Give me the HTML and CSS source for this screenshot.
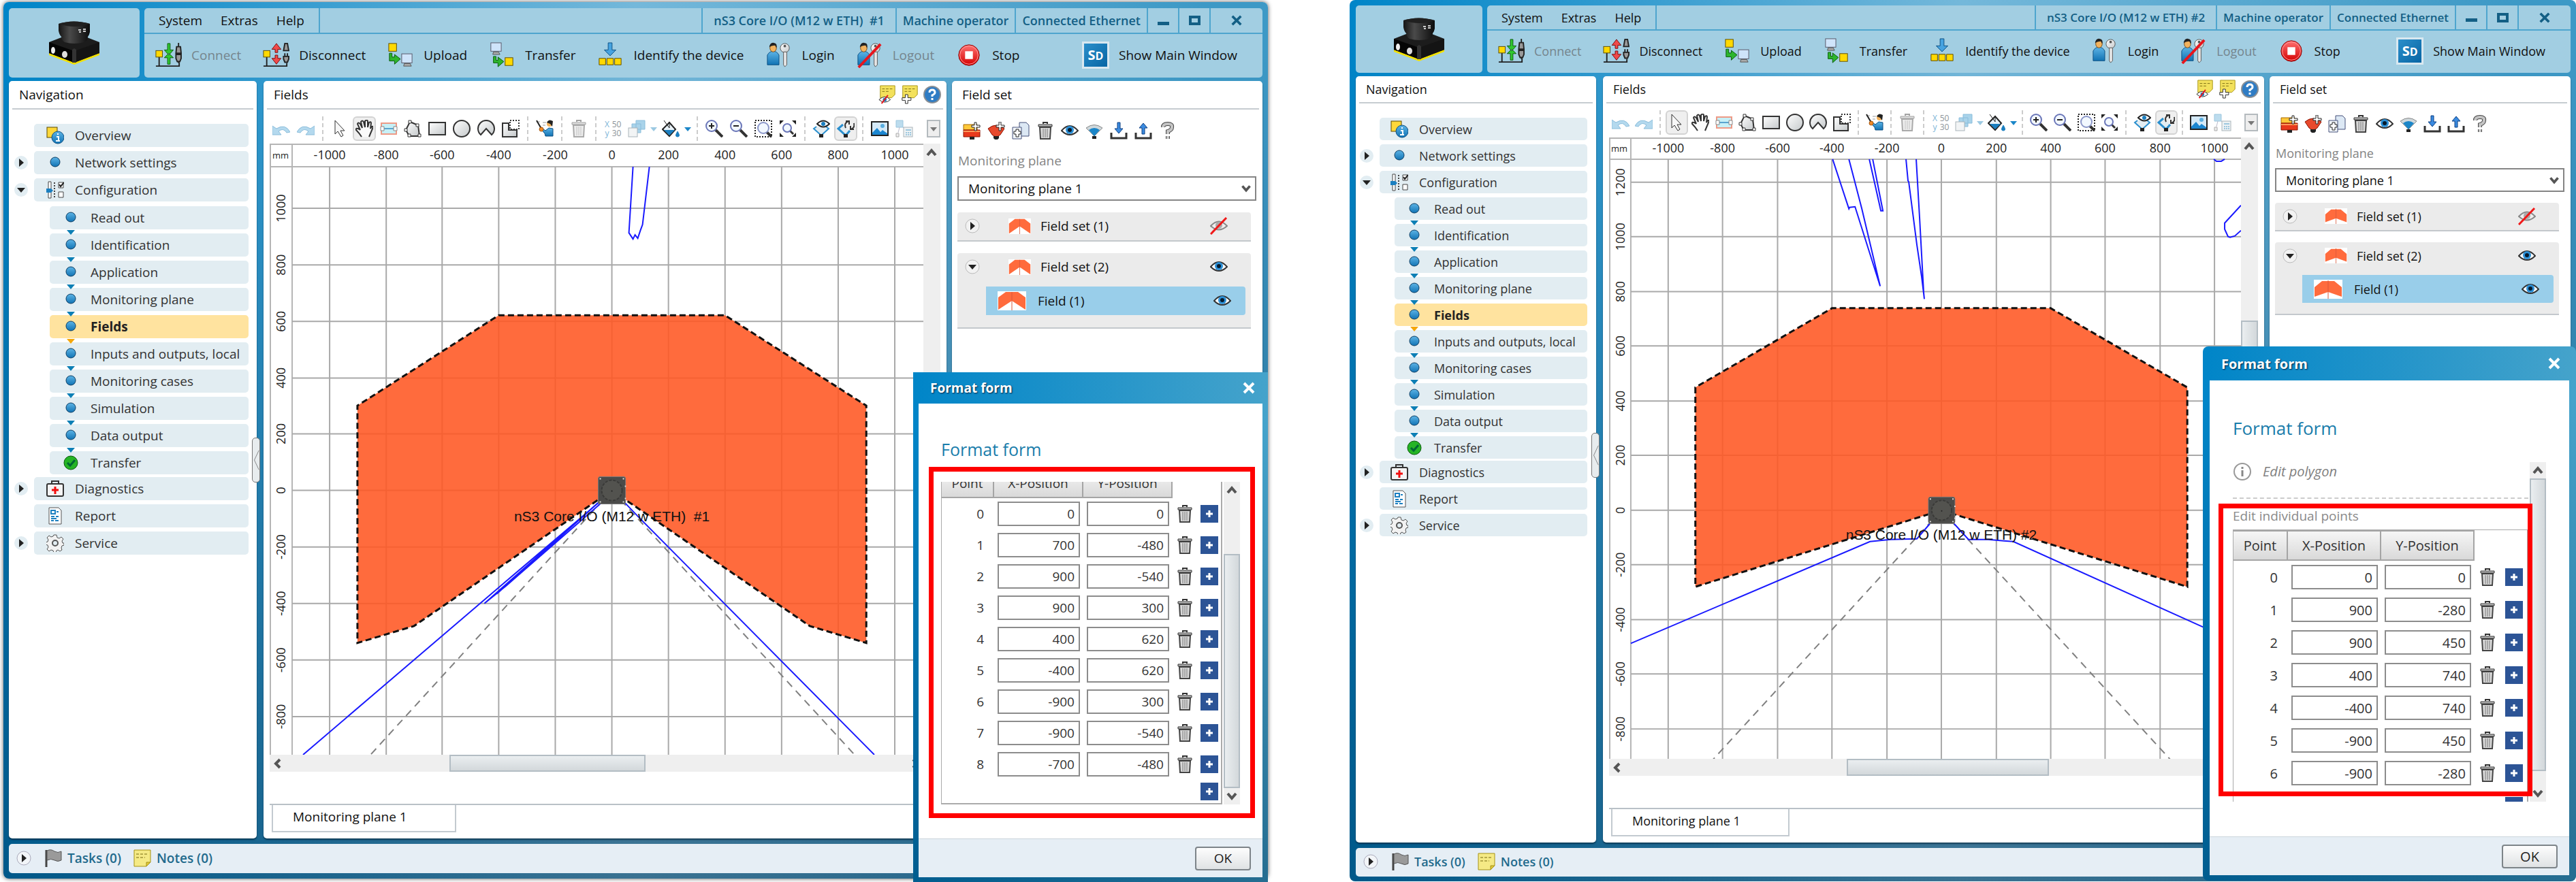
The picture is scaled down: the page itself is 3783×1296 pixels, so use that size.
FILE: index.html
```html
<!DOCTYPE html>
<html lang="en">
<head>
<meta charset="utf-8">
<title>Safety Designer</title>
<link rel="stylesheet" href="styles.css">
</head>
<body>
<svg class="sprite" aria-hidden="true">
  <defs>
    <linearGradient id="gBlue" x1="0" y1="0" x2="0" y2="1"><stop offset="0" stop-color="#5db4e6"/><stop offset="1" stop-color="#1173b4"/></linearGradient>
    <linearGradient id="gGrey" x1="0" y1="0" x2="1" y2="1"><stop offset="0" stop-color="#fff"/><stop offset="1" stop-color="#c4c8ca"/></linearGradient>
    <linearGradient id="gRed" x1="0" y1="0" x2="0" y2="1"><stop offset="0" stop-color="#ff7272"/><stop offset="1" stop-color="#d40000"/></linearGradient>
    <linearGradient id="gBlack" x1="0" y1="0" x2="1" y2="0"><stop offset="0" stop-color="#151515"/><stop offset=".35" stop-color="#4a4a4a"/><stop offset="1" stop-color="#0c0c0c"/></linearGradient>
  </defs>
  <symbol id="device" viewBox="0 0 74 64">
    <path d="M0 45l37 14 37-14v5L37 64 0 50z" fill="#f2e100"/>
    <path d="M0 31l18-7h38l18 7v16L37 61 0 47z" fill="#1c1c1c"/>
    <path d="M0 31l34 12v17L0 47z" fill="#050505"/><path d="M40 43l34-12v16L40 60z" fill="#141414"/><path d="M34 42l3-2 3 2v19h-6z" fill="#333"/>
    <path d="M14 4Q36-3 60 4v12q-1 5-3 7 0 6-5 8-15 4-29 0-4-2-5-8-3-3-4-9z" fill="url(#gBlack)"/>
    <path d="M14 4Q36-3 60 4q-22 8-46 0z" fill="#202020"/>
    <ellipse cx="6" cy="43" rx="3" ry="5" fill="#eee"/><ellipse cx="23" cy="49" rx="4" ry="5" fill="#ddd"/>
    <path d="M43 13h4M50 12h4M44 16h3M50 15h4" stroke="#ccc" stroke-width="2"/>
  </symbol>
  <symbol id="connect" viewBox="0 0 40 40">
    <path d="M6 23v13M1 37h36v-6" fill="none" stroke="#222" stroke-width="2"/>
    <rect x="1" y="13" width="10" height="10" fill="#ffd900" stroke="#5a4a00"/>
    <path d="M19 2v10h-5l7 8 7-8h-5V2zM19 34V24h-5l7-7 7 7h-5v10z" fill="#2fc92f" stroke="#0a5a0a"/>
    <path d="M36 1v6M36 29v3" stroke="#222" stroke-width="2"/>
    <path d="M33 7h6l1 10h-8zM32 19h8v6l-2 5h-4l-2-5z" fill="#999" stroke="#222" stroke-width="2"/>
  </symbol>
  <symbol id="disconnect" viewBox="0 0 40 40">
    <path d="M6 23v13M1 37h36v-5" fill="none" stroke="#222" stroke-width="2"/>
    <rect x="1" y="13" width="10" height="10" fill="#ffd900" stroke="#5a4a00"/>
    <path d="M19 16v-5h-5l7-9 7 9h-5v5zM19 20v5h-5l7 9 7-9h-5v-5z" fill="#f04a4a" stroke="#7a0808"/>
    <path d="M34 2h4l2 11h-8zM32 22h8v4l-2 5h-4l-2-5z" fill="#999" stroke="#222" stroke-width="2"/><path d="M34 17v5M38 17v5" stroke="#222" stroke-width="2"/>
  </symbol>
  <symbol id="upload" viewBox="0 0 40 40">
    <rect x="2" y="2" width="12" height="12" fill="#ffd900" stroke="#5a4a00"/>
    <path d="M3 17v12h8v5l9-8-9-7v4H7v-6z" fill="#2db52d" stroke="#0a5a0a"/>
    <rect x="22" y="18" width="16" height="14" fill="#cfe4fa" stroke="#556"/><path d="M26 33h9l2 4H25z" fill="#aaa" stroke="#555"/>
  </symbol>
  <symbol id="transfer" viewBox="0 0 40 40">
    <rect x="3" y="1" width="16" height="13" fill="#cfe4fa" stroke="#556"/><path d="M7 15h8l2 4H6z" fill="#aaa" stroke="#555"/>
    <path d="M7 22v10h7v6l9-8-9-7v5h-3v-6z" fill="#2db52d" stroke="#0a5a0a"/>
    <rect x="25" y="24" width="12" height="12" fill="#ffd900" stroke="#5a4a00"/>
  </symbol>
  <symbol id="identify" viewBox="0 0 40 40">
    <path d="M17 1v11h-6l9 9 9-9h-6V1z" fill="#46a3e0" stroke="#0c4f82"/>
    <path d="M3 25h10v10H3zM15 25h10v10H15zM27 25h10v10H27z" fill="#ffd900" stroke="#5a4a00"/>
  </symbol>
  <symbol id="login" viewBox="0 0 40 40">
    <path d="M2 35V20q3-6 9-6t9 6v15z" fill="url(#gBlue)" stroke="#0c4f82"/>
    <ellipse cx="11" cy="9" rx="5" ry="6" fill="#f2b25e" stroke="#7a4a10"/><path d="M5 8q1-8 7-7 6 1 4 8l-2-4q-6 0-9 3z" fill="#222"/>
    <circle cx="29" cy="9" r="7" fill="url(#gGrey)" stroke="#555"/><circle cx="29" cy="6" r="2" fill="#555"/>
    <path d="M27 15h5v20l-3 3-2-3z" fill="#e6e6e6" stroke="#555"/>
  </symbol>
  <symbol id="logout" viewBox="0 0 40 40"><use href="#login" width="40" height="40"/><path d="M3 39L37 3" stroke="#e8151c" stroke-width="4"/></symbol>
  <symbol id="stop" viewBox="0 0 40 40"><circle cx="20" cy="20" r="16" fill="url(#gRed)" stroke="#8a0000"/><circle cx="20" cy="20" r="14" fill="none" stroke="#ff9a9a"/><rect x="14" y="14" width="12" height="12" fill="#fff"/></symbol>

  <symbol id="overview" viewBox="0 0 26 26"><rect x="1" y="1" width="15" height="15" fill="#ffd83a" stroke="#5a4a00"/><circle cx="17" cy="16" r="9" fill="url(#gBlue)" stroke="#0c4f82"/><path d="M17 10v2M15 15h3v6M14 21h6" stroke="#fff" stroke-width="2" fill="none"/></symbol>
  <symbol id="dot" viewBox="0 0 26 26"><circle cx="13" cy="12" r="7" fill="url(#gBlue)" stroke="#0b3d63" stroke-width="1"/></symbol>
  <symbol id="done" viewBox="0 0 26 26"><circle cx="13" cy="13" r="10" fill="#25b425" stroke="#0a5a0a"/><path d="M8 13l4 4 7-8" fill="none" stroke="#063" stroke-width="3"/></symbol>
  <symbol id="config" viewBox="0 0 26 26"><path d="M3 1h4v24H3zM18 2h7v8h-7zM18 16h7v8h-7z" fill="#fff" stroke="#444"/><path d="M12 2v23" stroke="#444" stroke-width="2" stroke-dasharray="2 2"/><path d="M0 11h7l3 3-3 3H0z" fill="#1b7fc0"/><path d="M19 5l2 3 5-6" fill="none" stroke="#222" stroke-width="2"/></symbol>
  <symbol id="diag" viewBox="0 0 26 26"><path d="M8 6V2h10v4" fill="none" stroke="#333" stroke-width="2"/><rect x="1" y="6" width="24" height="18" rx="2" fill="#f4f4f4" stroke="#333" stroke-width="2"/><path d="M13 10v11M8 15h10" stroke="#f20d0d" stroke-width="3"/></symbol>
  <symbol id="report" viewBox="0 0 26 26"><path d="M4 1h14l4 4v20H4z" fill="#fff" stroke="#555"/><path d="M7 5h6v5H7zM15 7h3M7 14h5M14 14h4M7 17h8M7 20h4M13 20h5" fill="none" stroke="#1b7fc0" stroke-width="2"/></symbol>
  <symbol id="gear" viewBox="0 0 26 26"><path d="M11 1h4l1 4 3 1 3-2 3 3-2 3 1 3 2 0v3l-3 1-1 3 1 3-3 2-3-2-2 1-1 3h-3l-1-3-3-1-3 2-3-3 2-3-1-3-3-1v-3l3-1 1-3-2-3 3-3 3 2 3-1z" fill="#f2f2f2" stroke="#555"/><circle cx="13" cy="13" r="4" fill="#e2edf2" stroke="#555" stroke-width="2"/></symbol>
  <symbol id="right" viewBox="0 0 22 22"><circle cx="11" cy="11" r="10" class="ring"/><path d="M8 5l7 6-7 6z"/></symbol>
  <symbol id="down" viewBox="0 0 22 22"><circle cx="11" cy="11" r="10" class="ring"/><path d="M5 8h12l-6 7z"/></symbol>

  <symbol id="undo" viewBox="0 0 26 26"><path d="M0 9v13h13l-4-5q7-6 12 2l5-1Q19 5 6 13z" fill="#b4d9ee" stroke="#8abddb" stroke-width="1"/></symbol>
  <symbol id="redo" viewBox="0 0 26 26"><path d="M26 9v13H13l4-5q-7-6-12 2l-5-1Q7 5 20 13z" fill="#b4d9ee" stroke="#8abddb" stroke-width="1"/></symbol>
  <symbol id="pointer" viewBox="0 0 26 26"><path d="M6 1v20l4-4 5 8 3-2-4-7h6z" fill="#f7f7f7" stroke="#333"/></symbol>
  <symbol id="hand" viewBox="0 0 26 26"><path d="M9 25Q6 20 1 15q-1-4 5-1l1 1L3 6q1-3 4 0l3 6L8 3q2-3 4 0l2 8V2q3-3 4 0l0 9 2-7q3-2 3 1l-1 8 2-3q3-1 1 3l-5 12" fill="#fafafa" stroke="#333" stroke-width="2"/></symbol>
  <symbol id="contour" viewBox="0 0 26 26"><rect x="2" y="5" width="22" height="16" fill="#c7f0f7" stroke="#ee9a86" stroke-width="2"/><path d="M3 13h20" stroke="#5ba4cf" stroke-width="2"/><path d="M1 10h5v6H1zM20 10h5v6h-5z" fill="#fff" stroke="#888"/></symbol>
  <symbol id="polygon" viewBox="0 0 26 26"><path d="M9 3l12 5 2 16H8L3 15z" fill="url(#gGrey)" stroke="#333" stroke-width="2"/><path d="M7 1h4v4H7zM18 6h4v4h-4zM21 21h4v4h-4zM6 21h4v4H6zM1 13h4v4H1z" fill="#fff" stroke="#333"/></symbol>
  <symbol id="rect" viewBox="0 0 26 26"><rect x="1" y="4" width="24" height="18" fill="url(#gGrey)" stroke="#333" stroke-width="2"/></symbol>
  <symbol id="circle" viewBox="0 0 26 26"><circle cx="13" cy="13" r="12" fill="url(#gGrey)" stroke="#333" stroke-width="2"/></symbol>
  <symbol id="arc" viewBox="0 0 26 26"><path d="M5 22a12 12 0 1 1 16 0l-8-9z" fill="url(#gGrey)" stroke="#333" stroke-width="2"/></symbol>
  <symbol id="cut" viewBox="0 0 26 26"><path d="M1 5h9v10h12v10H1z" fill="url(#gGrey)" stroke="#333" stroke-width="2"/><path d="M12 1h13v13H12z" fill="none" stroke="#333" stroke-width="2" stroke-dasharray="2 2"/></symbol>
  <symbol id="wizard" viewBox="0 0 26 26"><path d="M1 3h5M10 4h5M10 8h4" stroke="#999" stroke-width="1"/><path d="M1 1l7 12" stroke="#222" stroke-width="2"/><path d="M10 13l4 3 5-4 6 1v11H14l-1-4-4-4z" fill="url(#gBlue)" stroke="#0c4f82"/><circle cx="20" cy="6" r="4" fill="#f2b25e"/><path d="M16 4q3-6 9-2l-1 8-3-4z" fill="#222"/><circle cx="8" cy="14" r="3" fill="#f08a2a" stroke="#a4540a"/></symbol>
  <symbol id="trash" viewBox="0 0 26 26"><path d="M10 3V1h6v2" fill="none" stroke="#333" stroke-width="2"/><path d="M5 8h16l-1 17H6z" fill="#d9d9d9" stroke="#444" stroke-width="2"/><path d="M3 4h20v3H3z" fill="#bbb" stroke="#333"/><path d="M10 10v13M13 10v13M16 10v13" stroke="#777" stroke-width="1"/></symbol>
  <symbol id="layers" viewBox="0 0 26 26"><path d="M12 1h13v13H12zM6 6h13v13H6z" fill="#a9d3ea" stroke="#8abddb"/><rect x="1" y="12" width="13" height="13" fill="#f2f4f5" stroke="#a9b4ba"/></symbol>
  <symbol id="bucket" viewBox="0 0 26 26"><path d="M1 14L11 4l9 10-9 10z" fill="#e8f2f8" stroke="#222" stroke-width="2"/><path d="M3 15h16l-8 8z" fill="#1b7fc0"/><path d="M3 1l8 11V3" fill="none" stroke="#222" stroke-width="1"/><path d="M23 17q5 8 0 8t0-8z" fill="#1b7fc0" stroke="#1b7fc0"/></symbol>
  <symbol id="caret" viewBox="0 0 12 26"><path d="M1 11h10l-5 6z"/></symbol>
  <symbol id="zoomin" viewBox="0 0 26 26"><path d="M15 15l10 10" stroke="#333" stroke-width="4"/><circle cx="9" cy="9" r="8" fill="#f2f8ff" stroke="#6a76b8" stroke-width="2"/><path d="M5 9h8M9 5v8" stroke="#222" stroke-width="2"/></symbol>
  <symbol id="zoomout" viewBox="0 0 26 26"><path d="M15 15l10 10" stroke="#333" stroke-width="4"/><circle cx="9" cy="9" r="8" fill="#f2f8ff" stroke="#6a76b8" stroke-width="2"/><path d="M5 9h8" stroke="#222" stroke-width="2"/></symbol>
  <symbol id="zoomsel" viewBox="0 0 26 26"><rect x="1" y="1" width="24" height="24" fill="none" stroke="#222" stroke-width="2" stroke-dasharray="2 2"/><path d="M18 18l7 7" stroke="#333" stroke-width="4"/><circle cx="13" cy="12" r="8" fill="#f2f8ff" stroke="#8a96c8" stroke-width="2"/></symbol>
  <symbol id="zoomfit" viewBox="0 0 26 26"><path d="M1 7V1h6zM19 1h6v6zM25 19v6h-6zM7 25H1v-6z" fill="#222"/><path d="M15 15l6 6" stroke="#333" stroke-width="3"/><circle cx="12" cy="12" r="6" fill="#f2f8ff" stroke="#6a76b8" stroke-width="2"/></symbol>
  <symbol id="scanview" viewBox="0 0 26 26"><path d="M6 10L2 13l11 10 11-10-4-3" fill="#e4edf2" stroke="#2a8fce" stroke-width="2"/><path d="M7 6q9-9 18 0-9 9-18 0z" fill="#fff" stroke="#222" stroke-width="2"/><circle cx="16" cy="6" r="3" fill="#1b7fc0"/><path d="M10 21h6v5h-6z" fill="#222"/></symbol>
  <symbol id="scanlive" viewBox="0 0 26 26"><path d="M9 7L2 13l11 10 6-7" fill="#e4edf2" stroke="#2a8fce" stroke-width="3"/><path d="M13 12q-3-7 4-10M25 5q2 7-5 9M13 2h5v5M25 14h-5V9" fill="none" stroke="#333" stroke-width="2"/><path d="M10 21h6v5h-6z" fill="#222"/></symbol>
  <symbol id="picture" viewBox="0 0 26 26"><rect x="1" y="3" width="24" height="20" fill="#d4e9f7" stroke="#222" stroke-width="2"/><path d="M2 22v-3l7-7 5 6 3-3 7 5v2z" fill="#1b86d0"/><circle cx="17" cy="9" r="3" fill="#5aaee0"/></symbol>
  <symbol id="calc" viewBox="0 0 26 26"><path d="M1 1h10v10H1z" fill="#bcdcee" stroke="#9bc6de"/><path d="M11 11l3 3M6 11l-2 8" stroke="#bbc" stroke-width="1"/><rect x="12" y="11" width="13" height="14" fill="#eef2f4" stroke="#a9b4ba"/><path d="M15 14h8v2h-8z" fill="#9bc6de"/><path d="M15 19h8M15 22h8" stroke="#9bc6de" stroke-width="2" stroke-dasharray="2 1"/><path d="M1 20h4v5H1z" fill="#eee" stroke="#aaa"/></symbol>
  <symbol id="notehide" viewBox="0 0 26 30"><path d="M2 1h23v14l-5 5H2z" fill="#f3e15c" stroke="#a59214"/><path d="M5 6h17M5 10h12" stroke="#776a10" stroke-width="1" stroke-dasharray="4 2"/><path d="M0 23q9-9 18 0-9 8-18 0z" fill="#fff" stroke="#222"/><circle cx="9" cy="23" r="3" fill="#1b7fc0"/><path d="M4 29L14 16" stroke="#e8151c" stroke-width="2"/></symbol>
  <symbol id="noteadd" viewBox="0 0 26 30"><path d="M2 1h23v14l-5 5H2z" fill="#f3e15c" stroke="#a59214"/><path d="M5 6h17M5 10h12" stroke="#776a10" stroke-width="1" stroke-dasharray="4 2"/><path d="M6 15h4v5h5v4h-5v5H6v-5H1v-4h5z" fill="#fff" stroke="#222"/></symbol>
  <symbol id="help" viewBox="0 0 26 26"><circle cx="13" cy="13" r="12" fill="#2f7cc4" stroke="#8a8f94" stroke-width="2"/><path d="M9 10q0-4 4-4t4 4q0 2-4 4v2M13 18v3" fill="none" stroke="#fff" stroke-width="3"/></symbol>

  <symbol id="setadd" viewBox="0 0 26 26"><path d="M1 4h20v8H1z" fill="#ffc93a" stroke="#a66a00"/><path d="M1 12h24v10H1z" fill="#e8391c" stroke="#8a1200"/><path d="M1 14h24" stroke="#ff9a5a" stroke-width="2"/><path d="M10 22h7v4h-7z" fill="#222"/><path d="M17 1h3v4h5v3h-5v5h-3V8h-4V5h4z" fill="#fff" stroke="#222"/></symbol>
  <symbol id="fieldadd" viewBox="0 0 26 26"><path d="M1 10q12-10 24 0l-6 9-6 4-6-4z" fill="#e8492c" stroke="#8a1200"/><path d="M9 21h8v3l-2 2h-4l-2-2z" fill="#222"/><path d="M17 0h3v5h5v3h-5v5h-3V8h-4V5h4z" fill="#fff" stroke="#222"/></symbol>
  <symbol id="copy" viewBox="0 0 26 26"><path d="M11 1h10l4 4v16H11z" fill="#dce8f4" stroke="#44507a"/><path d="M1 8h13v17H1z" fill="#f0f4f8" stroke="#44507a"/><path d="M6 11h4v3h3v4h-3v4H6v-4H3v-4h3z" fill="#fff" stroke="#222"/></symbol>
  <symbol id="eye" viewBox="0 0 26 26"><path d="M1 13q12-14 24 0-12 12-24 0z" fill="#fff" stroke="#333" stroke-width="2"/><circle cx="13" cy="12" r="6" fill="#2b8fd6"/><circle cx="13" cy="12" r="3" fill="#061a2c"/></symbol>
  <symbol id="eyeoff" viewBox="0 0 26 26"><path d="M1 13q12-13 24 0-12 11-24 0z" fill="#eee" stroke="#888" stroke-width="2"/><circle cx="13" cy="12" r="5" fill="#aaa"/><path d="M1 25L24 1" stroke="#f01818" stroke-width="3"/></symbol>
  <symbol id="scan" viewBox="0 0 26 26"><path d="M1 9q12-9 24 0L13 21z" fill="#cfd8dc" stroke="#888"/><path d="M5 12q8-6 16 0l-8 9z" fill="#1b86c8"/><path d="M10 21h6v4h-6z" fill="#222"/></symbol>
  <symbol id="import" viewBox="0 0 26 26"><path d="M2 16v8h22v-8" fill="none" stroke="#333" stroke-width="3"/><path d="M11 1h4v9h4l-6 7-6-7h4z" fill="#3b8be0" stroke="#0c3f82"/></symbol>
  <symbol id="export" viewBox="0 0 26 26"><path d="M2 16v8h22v-8" fill="none" stroke="#333" stroke-width="3"/><path d="M11 18h4V9h4l-6-7-6 7h4z" fill="#3b8be0" stroke="#0c3f82"/></symbol>
  <symbol id="ask" viewBox="0 0 26 26"><path d="M6 8q0-5 7-5t6 5q0 4-6 6v4M13 21v4" fill="none" stroke="#444" stroke-width="6"/><path d="M6 8q0-5 7-5t6 5q0 4-6 6v4M13 21v4" fill="none" stroke="#c4c4c4" stroke-width="4"/></symbol>
  <symbol id="shapeA" viewBox="0 0 42 28" preserveAspectRatio="none"><path d="M0 0h42v28H0z" fill="#fff"/><path d="M1 9L12 1h18l11 8v18L21 14 1 27z" fill="#ff6b3d"/><path d="M21 1v27" stroke="#d9583a" stroke-width="1"/></symbol>
  <symbol id="shapeB" viewBox="0 0 42 28" preserveAspectRatio="none"><path d="M0 0h42v28H0z" fill="#fff"/><path d="M1 11L12 2h18l11 9v14L21 18 1 25z" fill="#ff6b3d"/><path d="M21 1v27" stroke="#d9583a" stroke-width="1"/></symbol>
  <symbol id="flag" viewBox="0 0 26 26"><path d="M3 1v25" stroke="#444" stroke-width="3"/><path d="M4 2q6-3 11 1 5 3 10 0v13q-5 3-10 0-5-3-11 0z" fill="#9a9a9a" stroke="#555"/></symbol>
  <symbol id="note" viewBox="0 0 26 26"><path d="M1 1h24v18l-6 6H1z" fill="#f5ea85" stroke="#a59214"/><path d="M25 19h-6v6z" fill="#e0c93a" stroke="#a59214"/><path d="M4 7h18M4 12h13" stroke="#776a10" stroke-width="1" stroke-dasharray="4 2"/></symbol>
  <symbol id="chevup" viewBox="0 0 24 24"><path d="M6 16l6-7 6 7" fill="none" stroke="#555" stroke-width="4"/></symbol>
  <symbol id="chevdown" viewBox="0 0 24 24"><path d="M6 8l6 7 6-7" fill="none" stroke="#555" stroke-width="4"/></symbol>
  <symbol id="chevleft" viewBox="0 0 24 24"><path d="M15 6l-6 6 6 6" fill="none" stroke="#555" stroke-width="4"/></symbol>
  <symbol id="chevright" viewBox="0 0 24 24"><path d="M9 6l6 6-6 6" fill="none" stroke="#555" stroke-width="4"/></symbol>
  <symbol id="plus" viewBox="0 0 26 26"><path d="M0 0h26v26H0z" fill="#2c5496"/><path d="M13 8v10M8 13h10" stroke="#fff" stroke-width="3"/></symbol>
  <symbol id="cross" viewBox="0 0 20 20"><path d="M3 3l14 14M17 3L3 17" stroke="currentColor" stroke-width="4"/></symbol>
  <symbol id="info" viewBox="0 0 28 28"><circle cx="14" cy="14" r="12" fill="#fff" stroke="#999" stroke-width="2"/><path d="M14 7v3M14 12v9" stroke="#888" stroke-width="3"/></symbol>
  <symbol id="topview" viewBox="0 0 42 42"><rect x="1" y="1" width="40" height="40" rx="3" fill="#4b4b49" stroke="#777"/><circle cx="21" cy="21" r="15" fill="#53534f" stroke="#3a3a38" stroke-width="2" stroke-dasharray="4 2"/><path d="M3 4h2M37 4h2M3 38h2M37 38h2M41 14v2M41 32v2" stroke="#ddd" stroke-width="2"/><circle cx="21" cy="22" r="1" fill="#222"/></symbol>
</svg>

<main class="desktop">

<section class="app app-a" aria-label="nS3 Core I/O #1">
  <header class="top">
    <div class="logo"><svg><use href="#device"/></svg></div>
    <div class="bars">
      <div class="titlebar">
        <nav class="menu"><a href="#">System</a><a href="#">Extras</a><a href="#">Help</a></nav>
        <span class="cell name">nS3 Core I/O (M12 w ETH)&nbsp; #1</span><span class="cell">Machine operator</span><span class="cell">Connected Ethernet</span>
        <button class="win" aria-label="Minimize"><i class="min"></i></button><button class="win" aria-label="Maximize"><i class="max"></i></button><button class="win close" aria-label="Close"><svg><use href="#cross"/></svg></button>
      </div>
      <div class="actions">
        <button disabled><svg><use href="#connect"/></svg>Connect</button>
        <button><svg><use href="#disconnect"/></svg>Disconnect</button>
        <button><svg><use href="#upload"/></svg>Upload</button>
        <button><svg><use href="#transfer"/></svg>Transfer</button>
        <button><svg><use href="#identify"/></svg>Identify the device</button>
        <button><svg><use href="#login"/></svg>Login</button>
        <button disabled><svg><use href="#logout"/></svg>Logout</button>
        <button><svg><use href="#stop"/></svg>Stop</button>
        <button class="last"><span class="sd"><b>S<small>D</small></b></span>Show Main Window</button>
      </div>
    </div>
  </header>

  <div class="work">
    <aside class="panel side">
      <h2>Navigation</h2>
      <ul class="tree">
        <li><a href="#"><svg><use href="#overview"/></svg>Overview</a></li>
        <li><button class="exp" aria-label="Expand"><svg><use href="#right"/></svg></button><a href="#"><svg><use href="#dot"/></svg>Network settings</a></li>
        <li><button class="exp" aria-label="Collapse"><svg><use href="#down"/></svg></button><a href="#"><svg><use href="#config"/></svg>Configuration</a></li>
      </ul>
      <ul class="tree sub">
        <li><a href="#"><svg><use href="#dot"/></svg>Read out</a></li>
        <li><a href="#"><svg><use href="#dot"/></svg>Identification</a></li>
        <li><a href="#"><svg><use href="#dot"/></svg>Application</a></li>
        <li><a href="#"><svg><use href="#dot"/></svg>Monitoring plane</a></li>
        <li class="current"><a href="#" aria-current="page"><svg><use href="#dot"/></svg>Fields</a></li>
        <li><a href="#"><svg><use href="#dot"/></svg>Inputs and outputs, local</a></li>
        <li><a href="#"><svg><use href="#dot"/></svg>Monitoring cases</a></li>
        <li><a href="#"><svg><use href="#dot"/></svg>Simulation</a></li>
        <li><a href="#"><svg><use href="#dot"/></svg>Data output</a></li>
        <li><a href="#"><svg><use href="#done"/></svg>Transfer</a></li>
      </ul>
      <ul class="tree">
        <li><button class="exp" aria-label="Expand"><svg><use href="#right"/></svg></button><a href="#"><svg><use href="#diag"/></svg>Diagnostics</a></li>
        <li><a href="#"><svg><use href="#report"/></svg>Report</a></li>
        <li><button class="exp" aria-label="Expand"><svg><use href="#right"/></svg></button><a href="#"><svg><use href="#gear"/></svg>Service</a></li>
      </ul>
      <button class="handle" aria-label="Collapse navigation"><svg viewBox="0 0 12 66"><path d="M11 16L3 33l8 17" fill="none" stroke="#777" stroke-width="1"/></svg></button>
    </aside>

    <section class="panel center">
      <h2>Fields<span class="tips"><button aria-label="Hide notes"><svg><use href="#notehide"/></svg></button><button aria-label="Add note"><svg><use href="#noteadd"/></svg></button><button aria-label="Help"><svg><use href="#help"/></svg></button></span></h2>
      <div class="tools">
        <button aria-label="Undo"><svg><use href="#undo"/></svg></button><button aria-label="Redo"><svg><use href="#redo"/></svg></button><hr>
        <button aria-label="Select"><svg><use href="#pointer"/></svg></button><button class="on" aria-label="Pan"><svg><use href="#hand"/></svg></button><button aria-label="Contour"><svg><use href="#contour"/></svg></button><button aria-label="Polygon"><svg><use href="#polygon"/></svg></button><button aria-label="Rectangle"><svg><use href="#rect"/></svg></button><button aria-label="Circle"><svg><use href="#circle"/></svg></button><button aria-label="Arc"><svg><use href="#arc"/></svg></button><button aria-label="Cut out"><svg><use href="#cut"/></svg></button><hr>
        <button aria-label="Assistant"><svg><use href="#wizard"/></svg></button><hr>
        <button aria-label="Delete" class="dim"><svg><use href="#trash"/></svg></button><hr>
        <button aria-label="Coordinates" class="xy"><b>X</b><i>50</i><b>y</b><i>30</i></button><button aria-label="Order"><svg><use href="#layers"/></svg></button><svg class="caret pale"><use href="#caret"/></svg><button aria-label="Fill"><svg><use href="#bucket"/></svg></button><svg class="caret"><use href="#caret"/></svg><hr>
        <button aria-label="Zoom in"><svg><use href="#zoomin"/></svg></button><button aria-label="Zoom out"><svg><use href="#zoomout"/></svg></button><button aria-label="Zoom selection"><svg><use href="#zoomsel"/></svg></button><button aria-label="Zoom to fit"><svg><use href="#zoomfit"/></svg></button><hr>
        <button aria-label="Show contour"><svg><use href="#scanview"/></svg></button><button class="on" aria-label="Live contour"><svg><use href="#scanlive"/></svg></button><hr>
        <button aria-label="Background image"><svg><use href="#picture"/></svg></button><button aria-label="Calculate"><svg><use href="#calc"/></svg></button>
        <button class="more" aria-label="More tools"><svg><use href="#caret"/></svg></button>
      </div>
      <div class="canvas">
        <svg class="plot" viewBox="397 211 959 897" preserveAspectRatio="xMinYMin slice" role="img" aria-label="Field editor">
          <path class="frame" d="M398 1108V212h958M398 245h958M430 212v896"/>
          <path class="grid" d="M485 245v863M568 245v863M650 245v863M733 245v863M816 245v863M899 245v863M982 245v863M1065 245v863M1148 245v863M1231 245v863M1314 245v863M430 306h926M430 389h926M430 472h926M430 555h926M430 637h926M430 720h926M430 803h926M430 886h926M430 969h926M430 1052h926"/>
          <g class="ticks">
            <text class="unit" x="413" y="233">mm</text>
            <text x="485" y="234">-1000</text><text x="568" y="234">-800</text><text x="650" y="234">-600</text><text x="733" y="234">-400</text><text x="816" y="234">-200</text><text x="899" y="234">0</text><text x="982" y="234">200</text><text x="1065" y="234">400</text><text x="1148" y="234">600</text><text x="1231" y="234">800</text><text x="1314" y="234">1000</text>
            <g transform="rotate(-90)"><text x="-306" y="420">1000</text><text x="-389" y="420">800</text><text x="-472" y="420">600</text><text x="-555" y="420">400</text><text x="-637" y="420">200</text><text x="-720" y="420">0</text><text x="-803" y="420">-200</text><text x="-886" y="420">-400</text><text x="-969" y="420">-600</text><text x="-1052" y="420">-800</text></g>
          </g>
          <path class="field" transform="translate(899 720) scale(.4147 -.4147)" d="M0 0L700-480 900-540V300L400 620H-400L-900 300V-540L-700-480z"/>
          <path class="sector" d="M899 720L545 1108M899 720L1255 1108"/>
          <path class="beam" d="M930 245L924 342 930 351 933 345 937 350 941 338 944 330 954 245M882 736L736 860 446 1108M879 738L712 886 744 860 884 738M876 741L730 872M916 736L940 761 1284 1108"/>
          <use href="#topview" x="878" y="699" width="42" height="42"/>
          <text class="tag" x="899" y="765">nS3 Core I/O (M12 w ETH)&#160; #1</text>
        </svg>
        <div class="vscroll"><svg><use href="#chevup"/></svg></div>
        <div class="hscroll"><svg><use href="#chevleft"/></svg><i class="thumb"></i><svg class="far"><use href="#chevright"/></svg></div>
      </div>
      <div class="tabs"><button>Monitoring plane 1</button></div>
    </section>

    <aside class="panel sets">
      <h2>Field set</h2>
      <div class="settools"><button aria-label="Add field set"><svg><use href="#setadd"/></svg></button><button aria-label="Add field"><svg><use href="#fieldadd"/></svg></button><button aria-label="Duplicate"><svg><use href="#copy"/></svg></button><button aria-label="Delete"><svg><use href="#trash"/></svg></button><button aria-label="Show"><svg><use href="#eye"/></svg></button><button aria-label="Scan"><svg><use href="#scan"/></svg></button><button aria-label="Import"><svg><use href="#import"/></svg></button><button aria-label="Export"><svg><use href="#export"/></svg></button><button aria-label="Help"><svg><use href="#ask"/></svg></button></div>
      <label for="plane-a">Monitoring plane</label>
      <div class="pick"><select id="plane-a"><option>Monitoring plane 1</option></select><svg><use href="#chevdown"/></svg></div>
      <div class="set"><div class="line"><button class="exp" aria-label="Expand"><svg><use href="#right"/></svg></button><svg class="thumbnail"><use href="#shapeA"/></svg><span>Field set (1)</span><button class="see" aria-label="Show"><svg><use href="#eyeoff"/></svg></button></div></div>
      <div class="set"><div class="line"><button class="exp" aria-label="Collapse"><svg><use href="#down"/></svg></button><svg class="thumbnail"><use href="#shapeA"/></svg><span>Field set (2)</span><button class="see" aria-label="Hide"><svg><use href="#eye"/></svg></button></div>
        <div class="child"><svg class="thumbnail"><use href="#shapeA"/></svg><span>Field (1)</span><button class="see" aria-label="Hide"><svg><use href="#eye"/></svg></button></div></div>
    </aside>
  </div>

  <footer class="status"><button class="exp" aria-label="Expand"><svg><use href="#right"/></svg></button><a href="#"><svg><use href="#flag"/></svg>Tasks (0)</a><a href="#"><svg><use href="#note"/></svg>Notes (0)</a></footer>

  <section class="dialog" role="dialog" aria-label="Format form">
    <header><b>Format form</b><button aria-label="Close"><svg><use href="#cross"/></svg></button></header>
    <div class="content">
      <h3>Format form</h3>
      <div class="scroller">
        <div class="view end">
          <table>
            <colgroup><col class="c-point"><col class="c-pos"><col class="c-pos"><col class="c-icon"><col></colgroup>
            <thead><tr><th scope="col">Point</th><th scope="col">X-Position</th><th scope="col">Y-Position</th><td></td><td></td></tr></thead>
            <tbody>
              <tr><td>0</td><td><input aria-label="X 0" value="0"></td><td><input aria-label="Y 0" value="0"></td><td><button aria-label="Delete point"><svg><use href="#trash"/></svg></button></td><td><button aria-label="Insert point"><svg><use href="#plus"/></svg></button></td></tr>
              <tr><td>1</td><td><input aria-label="X 1" value="700"></td><td><input aria-label="Y 1" value="-480"></td><td><button aria-label="Delete point"><svg><use href="#trash"/></svg></button></td><td><button aria-label="Insert point"><svg><use href="#plus"/></svg></button></td></tr>
              <tr><td>2</td><td><input aria-label="X 2" value="900"></td><td><input aria-label="Y 2" value="-540"></td><td><button aria-label="Delete point"><svg><use href="#trash"/></svg></button></td><td><button aria-label="Insert point"><svg><use href="#plus"/></svg></button></td></tr>
              <tr><td>3</td><td><input aria-label="X 3" value="900"></td><td><input aria-label="Y 3" value="300"></td><td><button aria-label="Delete point"><svg><use href="#trash"/></svg></button></td><td><button aria-label="Insert point"><svg><use href="#plus"/></svg></button></td></tr>
              <tr><td>4</td><td><input aria-label="X 4" value="400"></td><td><input aria-label="Y 4" value="620"></td><td><button aria-label="Delete point"><svg><use href="#trash"/></svg></button></td><td><button aria-label="Insert point"><svg><use href="#plus"/></svg></button></td></tr>
              <tr><td>5</td><td><input aria-label="X 5" value="-400"></td><td><input aria-label="Y 5" value="620"></td><td><button aria-label="Delete point"><svg><use href="#trash"/></svg></button></td><td><button aria-label="Insert point"><svg><use href="#plus"/></svg></button></td></tr>
              <tr><td>6</td><td><input aria-label="X 6" value="-900"></td><td><input aria-label="Y 6" value="300"></td><td><button aria-label="Delete point"><svg><use href="#trash"/></svg></button></td><td><button aria-label="Insert point"><svg><use href="#plus"/></svg></button></td></tr>
              <tr><td>7</td><td><input aria-label="X 7" value="-900"></td><td><input aria-label="Y 7" value="-540"></td><td><button aria-label="Delete point"><svg><use href="#trash"/></svg></button></td><td><button aria-label="Insert point"><svg><use href="#plus"/></svg></button></td></tr>
              <tr><td>8</td><td><input aria-label="X 8" value="-700"></td><td><input aria-label="Y 8" value="-480"></td><td><button aria-label="Delete point"><svg><use href="#trash"/></svg></button></td><td><button aria-label="Insert point"><svg><use href="#plus"/></svg></button></td></tr>
              <tr class="append"><td></td><td></td><td></td><td></td><td><button aria-label="Append point"><svg><use href="#plus"/></svg></button></td></tr>
            </tbody>
          </table>
        </div>
        <div class="bar"><svg><use href="#chevup"/></svg><i class="thumb"></i><svg><use href="#chevdown"/></svg></div>
      </div>
    </div>
    <footer><button>OK</button></footer>
    <div class="marker"></div>
  </section>
</section>

<section class="app app-b" aria-label="nS3 Core I/O #2">
  <header class="top">
    <div class="logo"><svg><use href="#device"/></svg></div>
    <div class="bars">
      <div class="titlebar">
        <nav class="menu"><a href="#">System</a><a href="#">Extras</a><a href="#">Help</a></nav>
        <span class="cell name">nS3 Core I/O (M12 w ETH) #2</span><span class="cell">Machine operator</span><span class="cell">Connected Ethernet</span>
        <button class="win" aria-label="Minimize"><i class="min"></i></button><button class="win" aria-label="Maximize"><i class="max"></i></button><button class="win close" aria-label="Close"><svg><use href="#cross"/></svg></button>
      </div>
      <div class="actions">
        <button disabled><svg><use href="#connect"/></svg>Connect</button>
        <button><svg><use href="#disconnect"/></svg>Disconnect</button>
        <button><svg><use href="#upload"/></svg>Upload</button>
        <button><svg><use href="#transfer"/></svg>Transfer</button>
        <button><svg><use href="#identify"/></svg>Identify the device</button>
        <button><svg><use href="#login"/></svg>Login</button>
        <button disabled><svg><use href="#logout"/></svg>Logout</button>
        <button><svg><use href="#stop"/></svg>Stop</button>
        <button class="last"><span class="sd"><b>S<small>D</small></b></span>Show Main Window</button>
      </div>
    </div>
  </header>

  <div class="work">
    <aside class="panel side">
      <h2>Navigation</h2>
      <ul class="tree">
        <li><a href="#"><svg><use href="#overview"/></svg>Overview</a></li>
        <li><button class="exp" aria-label="Expand"><svg><use href="#right"/></svg></button><a href="#"><svg><use href="#dot"/></svg>Network settings</a></li>
        <li><button class="exp" aria-label="Collapse"><svg><use href="#down"/></svg></button><a href="#"><svg><use href="#config"/></svg>Configuration</a></li>
      </ul>
      <ul class="tree sub">
        <li><a href="#"><svg><use href="#dot"/></svg>Read out</a></li>
        <li><a href="#"><svg><use href="#dot"/></svg>Identification</a></li>
        <li><a href="#"><svg><use href="#dot"/></svg>Application</a></li>
        <li><a href="#"><svg><use href="#dot"/></svg>Monitoring plane</a></li>
        <li class="current"><a href="#" aria-current="page"><svg><use href="#dot"/></svg>Fields</a></li>
        <li><a href="#"><svg><use href="#dot"/></svg>Inputs and outputs, local</a></li>
        <li><a href="#"><svg><use href="#dot"/></svg>Monitoring cases</a></li>
        <li><a href="#"><svg><use href="#dot"/></svg>Simulation</a></li>
        <li><a href="#"><svg><use href="#dot"/></svg>Data output</a></li>
        <li><a href="#"><svg><use href="#done"/></svg>Transfer</a></li>
      </ul>
      <ul class="tree">
        <li><button class="exp" aria-label="Expand"><svg><use href="#right"/></svg></button><a href="#"><svg><use href="#diag"/></svg>Diagnostics</a></li>
        <li><a href="#"><svg><use href="#report"/></svg>Report</a></li>
        <li><button class="exp" aria-label="Expand"><svg><use href="#right"/></svg></button><a href="#"><svg><use href="#gear"/></svg>Service</a></li>
      </ul>
      <button class="handle" aria-label="Collapse navigation"><svg viewBox="0 0 12 66"><path d="M11 16L3 33l8 17" fill="none" stroke="#777" stroke-width="1"/></svg></button>
    </aside>

    <section class="panel center">
      <h2>Fields<span class="tips"><button aria-label="Hide notes"><svg><use href="#notehide"/></svg></button><button aria-label="Add note"><svg><use href="#noteadd"/></svg></button><button aria-label="Help"><svg><use href="#help"/></svg></button></span></h2>
      <div class="tools">
        <button aria-label="Undo"><svg><use href="#undo"/></svg></button><button aria-label="Redo"><svg><use href="#redo"/></svg></button><hr>
        <button class="on" aria-label="Select"><svg><use href="#pointer"/></svg></button><button aria-label="Pan"><svg><use href="#hand"/></svg></button><button aria-label="Contour"><svg><use href="#contour"/></svg></button><button aria-label="Polygon"><svg><use href="#polygon"/></svg></button><button aria-label="Rectangle"><svg><use href="#rect"/></svg></button><button aria-label="Circle"><svg><use href="#circle"/></svg></button><button aria-label="Arc"><svg><use href="#arc"/></svg></button><button aria-label="Cut out"><svg><use href="#cut"/></svg></button><hr>
        <button aria-label="Assistant"><svg><use href="#wizard"/></svg></button><hr>
        <button aria-label="Delete" class="dim"><svg><use href="#trash"/></svg></button><hr>
        <button aria-label="Coordinates" class="xy"><b>X</b><i>50</i><b>y</b><i>30</i></button><button aria-label="Order"><svg><use href="#layers"/></svg></button><svg class="caret pale"><use href="#caret"/></svg><button aria-label="Fill"><svg><use href="#bucket"/></svg></button><svg class="caret"><use href="#caret"/></svg><hr>
        <button aria-label="Zoom in"><svg><use href="#zoomin"/></svg></button><button aria-label="Zoom out"><svg><use href="#zoomout"/></svg></button><button aria-label="Zoom selection"><svg><use href="#zoomsel"/></svg></button><button aria-label="Zoom to fit"><svg><use href="#zoomfit"/></svg></button><hr>
        <button aria-label="Show contour"><svg><use href="#scanview"/></svg></button><button class="on" aria-label="Live contour"><svg><use href="#scanlive"/></svg></button><hr>
        <button aria-label="Background image"><svg><use href="#picture"/></svg></button><button aria-label="Calculate"><svg><use href="#calc"/></svg></button>
        <button class="more" aria-label="More tools"><svg><use href="#caret"/></svg></button>
      </div>
      <div class="canvas">
        <svg class="plot" viewBox="2362 202 930 916" preserveAspectRatio="xMinYMin slice" role="img" aria-label="Field editor">
          <path class="frame" d="M2363 1118V203h929M2363 234h929M2394 203v915"/>
          <path class="grid" d="M2449 234v884M2529 234v884M2610 234v884M2690 234v884M2771 234v884M2851 234v884M2932 234v884M3012 234v884M3092 234v884M3173 234v884M3253 234v884M2394 268h898M2394 348h898M2394 429h898M2394 509h898M2394 590h898M2394 670h898M2394 751h898M2394 831h898M2394 912h898M2394 992h898M2394 1073h898"/>
          <g class="ticks">
            <text class="unit" x="2377" y="223">mm</text>
            <text x="2449" y="224">-1000</text><text x="2529" y="224">-800</text><text x="2610" y="224">-600</text><text x="2690" y="224">-400</text><text x="2771" y="224">-200</text><text x="2851" y="224">0</text><text x="2932" y="224">200</text><text x="3012" y="224">400</text><text x="3092" y="224">600</text><text x="3173" y="224">800</text><text x="3253" y="224">1000</text>
            <g transform="rotate(-90)"><text x="-268" y="2385">1200</text><text x="-348" y="2385">1000</text><text x="-429" y="2385">800</text><text x="-509" y="2385">600</text><text x="-590" y="2385">400</text><text x="-670" y="2385">200</text><text x="-751" y="2385">0</text><text x="-831" y="2385">-200</text><text x="-912" y="2385">-400</text><text x="-992" y="2385">-600</text><text x="-1073" y="2385">-800</text></g>
          </g>
          <path class="field" transform="translate(2851 751) scale(.4022 -.4022)" d="M0 0L900-280V450L400 740H-400L-900 450V-280z"/>
          <path class="sector" d="M2851 751L2515 1118M2851 751L3188 1118"/>
          <path class="beam" d="M2691 234L2715 307 2716 305 2724 304 2761 421 2734 307 2715 234M2745 234L2762 310 2765 310 2750 234M2799 234L2802 266 2803 267 2815 360 2822 407 2826 440 2825 430 2819 320 2814 234M3252 234L3256 237 3263 237 3268 234M3292 302L3268 328V337L3273 348 3276 349 3283 347 3292 339M2834 771L2815 793 2776 794 2746 797 2394 947M2870 771L2891 794H2920L2943 796 2957 797 3234 922 3292 948"/>
          <use href="#topview" x="2831" y="730" width="41" height="42"/>
          <text class="tag" x="2851" y="794">nS3 Core I/O (M12 w ETH) #2</text>
        </svg>
        <div class="vscroll"><svg><use href="#chevup"/></svg><i class="thumb"></i></div>
        <div class="hscroll"><svg><use href="#chevleft"/></svg><i class="thumb"></i></div>
      </div>
      <div class="tabs"><button>Monitoring plane 1</button></div>
    </section>

    <aside class="panel sets">
      <h2>Field set</h2>
      <div class="settools"><button aria-label="Add field set"><svg><use href="#setadd"/></svg></button><button aria-label="Add field"><svg><use href="#fieldadd"/></svg></button><button aria-label="Duplicate"><svg><use href="#copy"/></svg></button><button aria-label="Delete"><svg><use href="#trash"/></svg></button><button aria-label="Show"><svg><use href="#eye"/></svg></button><button aria-label="Scan"><svg><use href="#scan"/></svg></button><button aria-label="Import"><svg><use href="#import"/></svg></button><button aria-label="Export"><svg><use href="#export"/></svg></button><button aria-label="Help"><svg><use href="#ask"/></svg></button></div>
      <label for="plane-b">Monitoring plane</label>
      <div class="pick"><select id="plane-b"><option>Monitoring plane 1</option></select><svg><use href="#chevdown"/></svg></div>
      <div class="set"><div class="line"><button class="exp" aria-label="Expand"><svg><use href="#right"/></svg></button><svg class="thumbnail"><use href="#shapeB"/></svg><span>Field set (1)</span><button class="see" aria-label="Show"><svg><use href="#eyeoff"/></svg></button></div></div>
      <div class="set"><div class="line"><button class="exp" aria-label="Collapse"><svg><use href="#down"/></svg></button><svg class="thumbnail"><use href="#shapeB"/></svg><span>Field set (2)</span><button class="see" aria-label="Hide"><svg><use href="#eye"/></svg></button></div>
        <div class="child"><svg class="thumbnail"><use href="#shapeB"/></svg><span>Field (1)</span><button class="see" aria-label="Hide"><svg><use href="#eye"/></svg></button></div></div>
    </aside>
  </div>

  <footer class="status"><button class="exp" aria-label="Expand"><svg><use href="#right"/></svg></button><a href="#"><svg><use href="#flag"/></svg>Tasks (0)</a><a href="#"><svg><use href="#note"/></svg>Notes (0)</a></footer>

  <section class="dialog" role="dialog" aria-label="Format form">
    <header><b>Format form</b><button aria-label="Close"><svg><use href="#cross"/></svg></button></header>
    <div class="content">
      <h3>Format form</h3>
      <div class="scroller">
        <div class="view">
          <p class="hint"><svg><use href="#info"/></svg>Edit polygon</p>
          <h4>Edit individual points</h4>
          <table>
            <colgroup><col class="c-point"><col class="c-pos"><col class="c-pos"><col class="c-icon"><col></colgroup>
            <thead><tr><th scope="col">Point</th><th scope="col">X-Position</th><th scope="col">Y-Position</th><td></td><td></td></tr></thead>
            <tbody>
              <tr><td>0</td><td><input aria-label="X 0" value="0"></td><td><input aria-label="Y 0" value="0"></td><td><button aria-label="Delete point"><svg><use href="#trash"/></svg></button></td><td><button aria-label="Insert point"><svg><use href="#plus"/></svg></button></td></tr>
              <tr><td>1</td><td><input aria-label="X 1" value="900"></td><td><input aria-label="Y 1" value="-280"></td><td><button aria-label="Delete point"><svg><use href="#trash"/></svg></button></td><td><button aria-label="Insert point"><svg><use href="#plus"/></svg></button></td></tr>
              <tr><td>2</td><td><input aria-label="X 2" value="900"></td><td><input aria-label="Y 2" value="450"></td><td><button aria-label="Delete point"><svg><use href="#trash"/></svg></button></td><td><button aria-label="Insert point"><svg><use href="#plus"/></svg></button></td></tr>
              <tr><td>3</td><td><input aria-label="X 3" value="400"></td><td><input aria-label="Y 3" value="740"></td><td><button aria-label="Delete point"><svg><use href="#trash"/></svg></button></td><td><button aria-label="Insert point"><svg><use href="#plus"/></svg></button></td></tr>
              <tr><td>4</td><td><input aria-label="X 4" value="-400"></td><td><input aria-label="Y 4" value="740"></td><td><button aria-label="Delete point"><svg><use href="#trash"/></svg></button></td><td><button aria-label="Insert point"><svg><use href="#plus"/></svg></button></td></tr>
              <tr><td>5</td><td><input aria-label="X 5" value="-900"></td><td><input aria-label="Y 5" value="450"></td><td><button aria-label="Delete point"><svg><use href="#trash"/></svg></button></td><td><button aria-label="Insert point"><svg><use href="#plus"/></svg></button></td></tr>
              <tr><td>6</td><td><input aria-label="X 6" value="-900"></td><td><input aria-label="Y 6" value="-280"></td><td><button aria-label="Delete point"><svg><use href="#trash"/></svg></button></td><td><button aria-label="Insert point"><svg><use href="#plus"/></svg></button></td></tr>
              <tr class="append"><td></td><td></td><td></td><td></td><td><button aria-label="Append point"><svg><use href="#plus"/></svg></button></td></tr>
            </tbody>
          </table>
        </div>
        <div class="bar"><svg><use href="#chevup"/></svg><i class="thumb"></i><svg><use href="#chevdown"/></svg></div>
      </div>
    </div>
    <footer><button>OK</button></footer>
    <div class="marker"></div>
  </section>
</section>

</main>
</body>
</html>
```
FILE: styles.css
```css
*, *::before, *::after { box-sizing: border-box; }

body {
  margin: 0;
  background: #fff;
  color: #111;
  font-family: "Open Sans", "Noto Sans", sans-serif;
}

button, select, input { font: inherit; color: inherit; margin: 0; }
button { padding: 0; border: 0; background: none; display: flex; align-items: center; justify-content: center; }
a { color: inherit; text-decoration: none; }
ul { list-style: none; margin: 0; padding: 0; }
svg { display: block; width: 26px; height: 26px; flex: none; }
.sprite { position: absolute; width: 0; height: 0; }

.desktop {
  display: grid;
  grid-template-columns: 1857fr 1801fr;
  column-gap: 120px;
  height: 100vh;
  min-height: 1200px;
  padding-left: 5px;
}

/* ---------- application window ---------- */
.app {
  position: relative;
  display: flex;
  flex-direction: column;
  min-height: 0;
  border-radius: 8px;
  font-size: var(--text);
  background:
    linear-gradient(to bottom, transparent 5%, rgba(0, 44, 74, .5)),
    linear-gradient(to right, #0085c8, #74b8da 50%, #3d99c6 95%);
}
.app-a {
  --text: 19px; --caption: 18px; --head: 102px; --logo: 192px; --title: 38px; --side: 364px; --sets: 456px;
  --row: 34px; --indent: 37px; --subindent: 60px; --tail: 12px; --lead: 18px; --subtop: 7px; --subend: 4px;
  --cell: 36px; --h2: 42px; --dtext: 19px; --drow: 46px; --th: 44px; --line: 40px; --space: 18px;
  --thumb-at: 25%; --thumb: 30%;
  margin: 3px 0 5px;
  padding: 9px 8px 8px;
  box-shadow: 0 0 6px #555;
}
.app-b {
  --text: 18px; --caption: 17px; --head: 99px; --logo: 186px; --title: 37px; --side: 353px; --sets: 442px;
  --row: 33px; --indent: 35px; --subindent: 57px; --tail: 13px; --lead: 16px; --subtop: 6px; --subend: 3px;
  --cell: 35px; --h2: 40px; --dtext: 20px; --drow: 48px; --th: 45px; --line: 39px; --space: 17px;
  --thumb-at: 35%; --thumb: 32%;
  margin-bottom: 1px;
  padding: 8px 8px 7px 9px;
}

.top { display: flex; gap: 7px; height: var(--head); }
.logo, .bars { background: #a2cee2; border-radius: 5px; }
.logo { width: var(--logo); display: grid; place-items: center; }
.logo svg { width: 74px; height: 66px; }
.bars { flex: 1; display: flex; flex-direction: column; min-width: 0; }

.titlebar { display: flex; height: var(--title); border-bottom: 2px solid #4ea5ce; font-size: var(--caption); font-weight: 600; color: #135f85; }
.menu { display: flex; align-items: center; gap: 27px; padding: 0 21px; margin-right: auto; border-right: 2px solid #4ea5ce; font-size: var(--text); font-weight: 400; color: #111; }
.cell { display: flex; align-items: center; padding: 0 9px; border-left: 2px solid #4ea5ce; white-space: nowrap; }
.cell.name { padding: 0 16px; }
.win { width: 46px; border-left: 2px solid #4ea5ce; }
.win.close { width: 78px; }
.win svg { width: 18px; height: 18px; }
.min { width: 17px; height: 5px; margin-top: 8px; background: #135f85; }
.max { width: 17px; height: 14px; border: 4px solid #135f85; }

.actions { flex: 1; display: flex; align-items: center; gap: 31px; padding: 0 37px 2px 15px; }
.actions button { gap: 14px; white-space: nowrap; }
.actions button:disabled { color: #75858d; }
.actions .last { margin-left: auto; }
.actions svg { width: 40px; height: 38px; }
.sd { display: grid; place-items: center; width: 40px; height: 40px; border: 3px solid #d9e8f0; background: linear-gradient(135deg, #2b8fca, #0765a4); color: #fff; font-size: 20px; line-height: 24px; }
.sd small { font-size: 16px; }

/* ---------- panels ---------- */
.work { flex: 1; display: flex; gap: 8px; margin: 5px 0 8px; min-height: 0; }
.panel { background: #fff; border-radius: 5px; box-shadow: 0 2px 2px rgba(0, 30, 50, .6); }
.panel h2 {
  display: flex; align-items: center; flex: none;
  height: var(--h2); margin: 0 5px; padding: 0 10px;
  border-bottom: 2px solid #c6ccd1;
  font-size: inherit; font-weight: 400;
}

.side { position: relative; width: var(--side); margin-right: 2px; }
.tree { display: flex; flex-direction: column; gap: 6px; margin-top: 21px; padding: 0 var(--tail) 0 var(--indent); }
.tree li { position: relative; }
.tree a {
  display: flex; align-items: center; gap: 16px;
  height: var(--row); padding-left: var(--lead);
  background: #e2edf2; border-radius: 5px; color: #333; white-space: nowrap;
}
.tree .exp { position: absolute; left: -30px; top: 6px; }
.exp svg { width: 22px; height: 22px; fill: #222; }
.ring { fill: var(--ring, #e2edf2); stroke: var(--ring-line, none); }
.tree.sub { padding-left: var(--subindent); margin-top: var(--subtop); }
.tree.sub + .tree { margin-top: var(--subend); }
.sub li:not(:last-child)::after {
  content: ""; position: absolute; z-index: 1; left: calc(var(--lead) + 7px); top: 100%;
  margin-top: 1px;
  border: 6px solid transparent; border-top: 7px solid #0d7fb5; border-bottom: 0;
}
.sub .current a { background: #ffe39f; color: #222; font-weight: 700; }
.sub li.current::after { border-top-color: #f5a70a; }

.handle {
  position: absolute; z-index: 1; right: -5px; top: 524px; width: 12px; height: 66px;
  background: #e8ecee; border: 1px solid #777; border-radius: 5px;
}
.handle svg { width: 10px; height: 64px; }

.center { flex: 1; display: flex; flex-direction: column; min-width: 0; padding-bottom: 9px; }
.tips { display: flex; gap: 7px; margin-left: auto; }
.tips svg { height: 28px; }
.center h2 { padding-right: 3px; }
.tools { display: flex; flex: none; align-items: center; justify-content: space-between; height: 36px; margin: 10px 9px 4px; }
.tools button { width: calc(var(--cell) - 2px); height: 36px; }
.tools .on { background: #efefef; border: 2px solid #d3d3d3; border-radius: 6px; }
.tools .dim { opacity: .45; }
.tools hr { width: 0; height: 36px; margin: 0 5px; border: 0; border-left: 2px dashed #ccc; }
.tools .caret { width: 12px; fill: #1b86c8; }
.tools .pale { fill: #9cc9e2; }
.tools .xy { display: grid; grid-template-columns: 10px 14px; align-content: center; justify-content: center; column-gap: 2px; font-size: 12px; line-height: 13px; color: #8d9499; }
.xy b { font-weight: 400; color: #7fb6d8; }
.xy i { font-style: normal; }
.tools .more { width: 20px; height: 26px; margin-left: 14px; border: 2px solid #b4babe; background: #eee; fill: #777; }
.more svg { width: 12px; }

.canvas { flex: 1; display: grid; grid-template: minmax(0, 1fr) 25px / minmax(0, 1fr) 25px; margin: 0 9px; min-height: 0; }
.plot { width: 100%; height: 100%; }
.frame { fill: none; stroke: #b5b5b5; stroke-width: 2; }
.grid { fill: none; stroke: #a9a9a9; stroke-width: 2; }
.ticks { font-size: 18px; fill: #222; text-anchor: middle; }
.unit { font-size: 13px; }
.field { fill: #ff5722; fill-opacity: .88; stroke: #111; stroke-width: 3; stroke-dasharray: 9 5; vector-effect: non-scaling-stroke; }
.sector { fill: none; stroke: #808080; stroke-width: 2; stroke-dasharray: 11 8; }
.beam { fill: none; stroke: #1a1aff; stroke-width: 2; }
.tag { font-family: "Liberation Sans", Arial, sans-serif; font-size: 21px; text-anchor: middle; fill: #111; }

.vscroll { background: #efefef; display: flex; flex-direction: column; }
.hscroll { position: relative; background: #efefef; display: flex; align-items: center; }
.thumb { background: linear-gradient(to right, #eaeef0, #d3d8db); border: 2px solid #b3bdc4; }
.vscroll .thumb { margin-top: 243px; height: 200px; }
.hscroll .thumb { height: 25px; margin-left: var(--thumb-at); width: var(--thumb); background: linear-gradient(#eaeef0, #d3d8db); }
.hscroll svg, .vscroll svg { width: 24px; }
.hscroll .far { margin-left: auto; }

.tabs { flex: none; margin: 47px 9px 0; padding-left: 3px; border-top: 2px solid #b9c1c7; }
.tabs button { height: 40px; padding: 0 70px 4px 29px; border: 2px solid #c3cad0; border-top: 0; white-space: nowrap; }

/* ---------- field sets ---------- */
.sets { width: var(--sets); padding-bottom: 9px; }
.settools { display: flex; margin: var(--space) 0 0 11px; }
.settools button { width: var(--cell); height: 26px; }
.sets label { display: block; margin: var(--space) 9px 10px; line-height: 26px; color: #858585; }
.pick { position: relative; margin: 0 9px 0 8px; }
.pick select { display: block; width: 100%; height: 36px; padding: 0 14px; border: 2px solid #858585; background: #fff; appearance: none; }
.pick svg { position: absolute; right: 4px; top: 7px; width: 22px; height: 22px; }
.set { --ring: #f2f2f2; --ring-line: #bbb; margin: 17px 17px 0 8px; padding-bottom: 1px; background: #ebebeb; border-bottom: 2px solid #c3c8cc; border-radius: 4px 4px 0 0; }
.line { display: flex; align-items: center; height: var(--line); padding: 0 34px 0 11px; }
.line .thumbnail { width: 33px; height: 23px; margin: 0 14px 0 42px; }
.see { margin-left: auto; }
.set .child { display: flex; align-items: center; height: 42px; margin: 9px 8px 17px 42px; padding: 0 21px 0 17px; background: #99ceea; border-radius: 0 4px 4px 0; }
.child .thumbnail { width: 42px; height: 28px; margin-right: 17px; }
.app-b label { margin-bottom: 9px; }
.app-b .pick select { height: 35px; }
.app-b .set { margin-top: 16px; }
.app-b .line .thumbnail { margin-left: 40px; }
.app-b .set .child { height: 41px; margin: 9px 8px 15px 40px; }

/* ---------- status bar ---------- */
.status { --ring: #f2f5f8; --ring-line: #aab; display: flex; flex: none; align-items: center; gap: 18px; height: 43px; padding: 0 0 2px 11px; background: #e6eef5; border-radius: 5px; color: #1f6a8c; font-weight: 600; }
.app-b .status { height: 42px; }
.status a { display: flex; align-items: center; gap: 8px; }
.status .exp { margin-right: 1px; }

/* ---------- dialog ---------- */
.dialog {
  position: absolute; z-index: 2; right: 0; bottom: -5px;
  display: flex; flex-direction: column;
  padding: 0 8px 7px;
  font-size: var(--dtext);
  background:
    linear-gradient(to bottom, transparent 10%, rgba(0, 44, 74, .45)),
    linear-gradient(to right, #0085c8, #45a3cb);
}
.app-a .dialog { top: 544px; width: 521px; }
.app-b .dialog { top: 509px; width: 548px; bottom: 1px; padding: 0 10px 8px; border-radius: 8px; }
.dialog > header { display: flex; align-items: center; justify-content: space-between; height: 46px; padding: 0 10px 0 17px; color: #fff; }
.app-b .dialog > header { height: 50px; padding-right: 12px; }
.dialog header b { font-weight: 700; text-shadow: 1px 1px 2px #024; }
.dialog header svg { width: 20px; height: 20px; }
.content { flex: 1; display: flex; flex-direction: column; min-height: 0; padding: 51px 33px 50px; background: #fff; }
.app-b .content { padding: 54px 34px 51px; }
.content h3 { margin: 0 0 32px; font-size: 25px; line-height: 32px; font-weight: 400; color: #1a7dab; }
.app-b .content h3 { font-size: 26px; margin-bottom: 34px; }
.scroller { flex: 1; display: flex; gap: 2px; min-height: 0; }
.view { flex: 1; display: flex; flex-direction: column; min-width: 0; overflow: hidden; }
.view.end { justify-content: flex-end; }
.hint { display: flex; align-items: center; gap: 16px; margin: 0; height: 54px; padding-bottom: 25px; border-bottom: 2px dashed #ccc; color: #808080; font-style: italic; }
.hint svg { width: 28px; height: 28px; }
.view h4 { margin: 12px 0 7px; font-size: 19px; line-height: 26px; font-weight: 400; color: #8a8a8a; }

table { flex: none; width: 100%; table-layout: fixed; border-collapse: separate; border-spacing: 0; border: 2px solid #aaa; border-width: 0 2px 2px 1px; color: #333; }
.c-point { width: 77px; } .c-pos { width: 131px; } .c-icon { width: 36px; }
.app-b .c-point { width: 80px; } .app-b .c-pos { width: 137px; } .app-b .c-icon { width: 38px; }
th, td { padding: 0; }
thead tr { height: var(--th); }
th { border: 1px solid #a5a5a5; border-width: 2px 2px 2px 0; background: linear-gradient(#f6f6f6, #d9d9d9); font-weight: 400; }
.app-b table { border-top-width: 1px; }
tbody tr { height: var(--drow); }
tbody .append { height: 34px; }
.app-b .append { height: var(--drow); }
tbody td:first-child { padding-right: 15px; text-align: right; }
table input { display: block; width: calc(100% - 10px); height: 36px; margin: 0 auto; padding: 0 6px; border: 2px solid #8c8c8c; background: #fff; text-align: right; }
td button { margin: 0 auto; }

.bar { width: 24px; display: flex; flex-direction: column; background: #efefef; }
.bar svg { width: 24px; height: 24px; }
.bar .thumb { flex: 1; }
.app-a .bar .thumb { margin-top: 82px; }
.app-b .bar .thumb { margin-bottom: 21px; }

.dialog > footer { display: flex; flex: none; align-items: center; justify-content: flex-end; height: 57px; padding: 0 17px; background: #e6eef5; border-top: 1px solid #ccd5dc; }
.dialog > footer button { width: 82px; height: 35px; border: 2px solid #7d8489; border-radius: 4px; background: linear-gradient(#fdfdfd, #dfe2e4); color: #222; }

.marker { position: absolute; border: 7px solid #f00; pointer-events: none; left: 23px; right: 19px; top: 139px; bottom: 94px; }
.app-b .marker { right: 64px; top: 231px; bottom: 124px; }
```
